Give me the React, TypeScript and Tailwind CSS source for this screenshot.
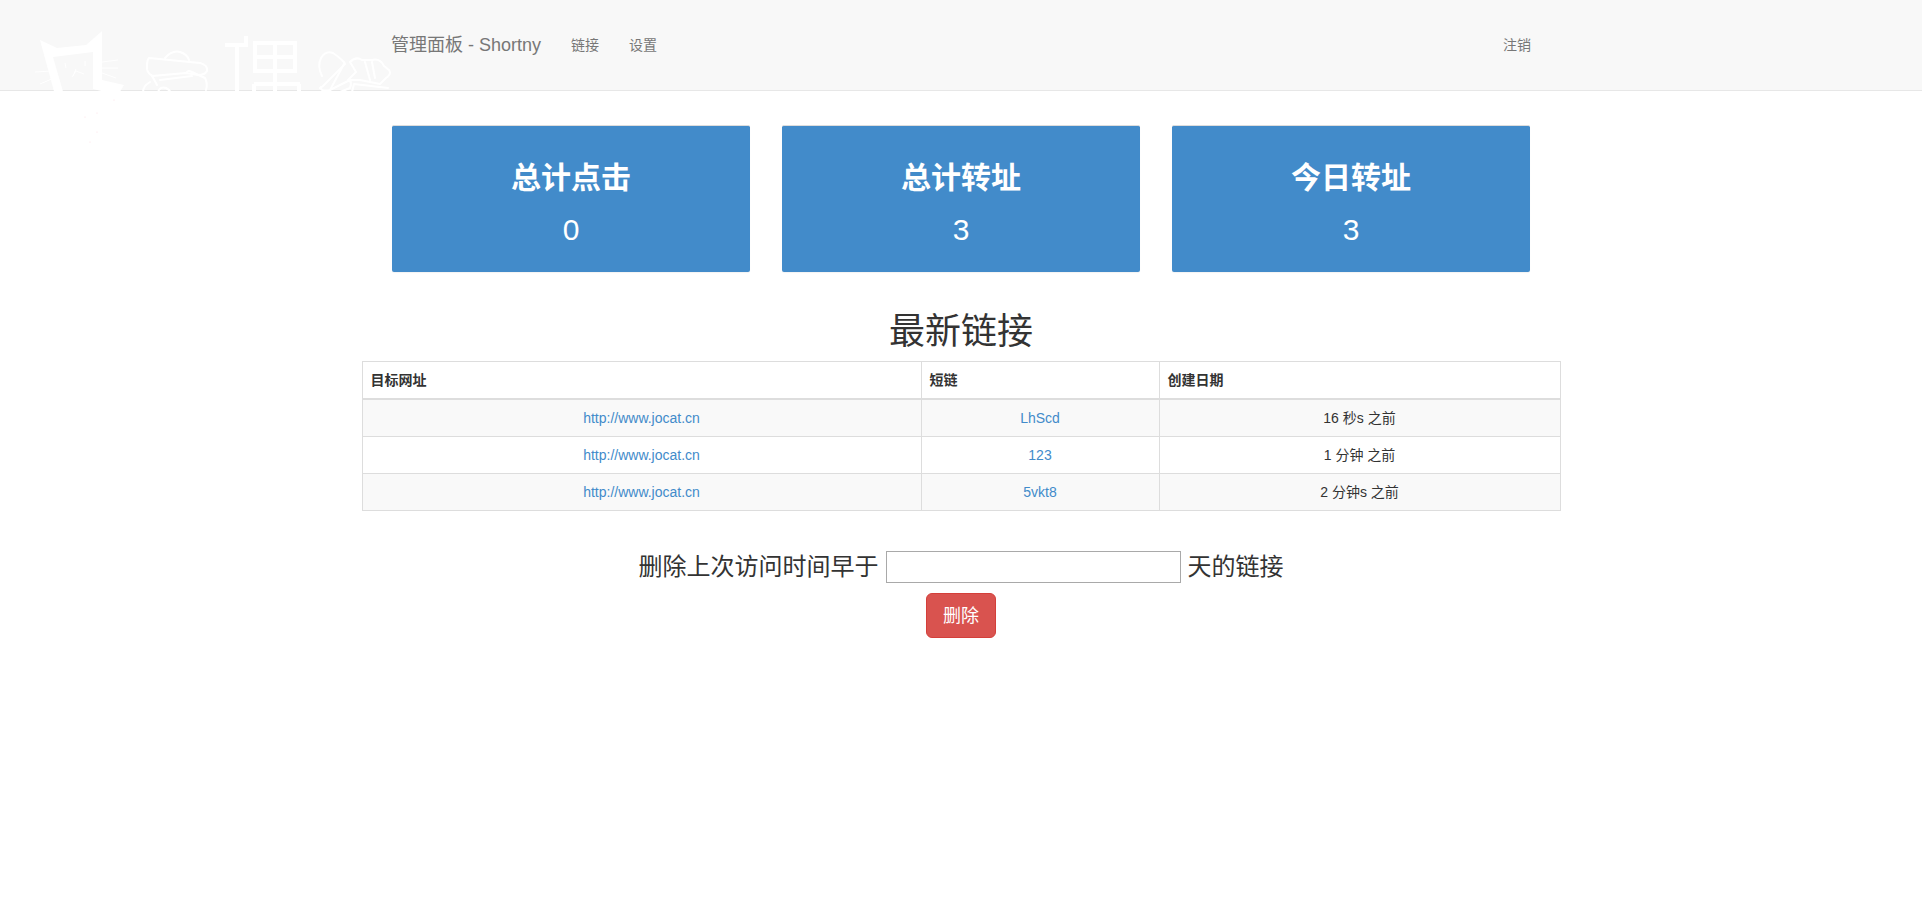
const FONT = "font-['Liberation_Sans','Noto_Sans_CJK_SC',sans-serif]";

function Watermark() {
  return (
    <svg className="absolute left-0 top-0" width="400" height="150" viewBox="0 0 400 150" fill="none" aria-hidden="true">
      <path
        fillRule="evenodd"
        fill="#ffffff"
        d="M40 40 L57 48 L86 45 L102 31 L102 80 L124 85 L118 95 L93 89 L93 52 L53 57 L64 95 L55 95 Z"
      />
      <g stroke="#ffffff" strokeWidth="1">
        <path d="M35 72 L52 71 M40 84 L54 78 M102 62 L118 60 M102 68 L118 68 M102 73 L116 78" />
        <path d="M65 63 L66 68 M85 61 L85 66 M76 69 L73 76 M76 71 L84 74 M76 71 L72 77" />
      </g>
      <g stroke="#ffffff" strokeWidth="2" strokeLinejoin="round" strokeLinecap="round">
        <path d="M149 58 L200 63 Q208 65 207 71 Q205 75 198 75 L186 73 L152 76 Q146 72 147 66 Q147 60 149 58 Z" />
        <path d="M165 58 Q172 50 180 52 Q187 54 189 60" />
        <path d="M157 85 Q150 72 152 76 M187 72 Q188 70 192 72 L205 78 Q208 84 206 90 M150 82 Q143 86 143 92 M158 92 Q160 86 166 88 Q170 90 170 92 M160 80 L192 76" />
      </g>
      <g stroke="#ffffff" strokeWidth="4">
        <path d="M225 45 L248 45 M246 36 L246 47 M237 45 L237 92" />
        <path d="M255 43 H295 V71 H255 Z M255 57 H295 M275 43 V92 M254 84 H300 M254 84 V92 M299 84 V92" />
      </g>
      <g stroke="#ffffff" strokeWidth="2" strokeLinejoin="round" strokeLinecap="round">
        <path d="M322 76 Q317 66 321 58 Q326 50 333 53 Q338 56 344 62 L345 64 L323 86 Q318 90 321 87 Q320 92 330 90 L350 80 Q352 84 350 88 L340 92" />
        <path d="M344 64 L330 90 M350 62 Q356 56 362 60 L372 60 Q380 58 384 66 L389 70 Q392 74 386 78 L380 84 L360 80 L348 80 L356 72 Z" />
        <path d="M365 62 L370 80 M372 62 L375 78 M388 88 L354 84 L352 92" />
      </g>
      <g fill="#fbdde3">
        <circle cx="114" cy="100" r="0.6" />
        <circle cx="97" cy="113" r="0.6" />
        <circle cx="85" cy="117" r="0.6" />
        <circle cx="97" cy="132" r="0.6" />
        <circle cx="90" cy="142" r="0.6" />
      </g>
    </svg>
  );
}

function Stat({ title, value }: { title: string; value: string }) {
  return (
    <div className="flex h-[147px] flex-col items-center rounded-[2px] border border-[#dddddd] border-b-0 border-x-0 bg-[#428bca] pt-[32px] text-white shadow-[0_1px_1px_rgba(0,0,0,0.05)]">
      <h2 className="text-[30px] font-bold leading-[40px]">{title}</h2>
      <div className="mt-[12px] text-[30px] leading-[40px]">{value}</div>
    </div>
  );
}

const rows = [
  { url: "http://www.jocat.cn", short: "LhScd", date: "16 秒s 之前" },
  { url: "http://www.jocat.cn", short: "123", date: "1 分钟 之前" },
  { url: "http://www.jocat.cn", short: "5vkt8", date: "2 分钟s 之前" },
];

export default function App() {
  return (
    <div className={`relative min-h-[908px] bg-white text-[14px] leading-[20px] text-[#333333] ${FONT}`}>
      <nav className="h-[91px] border-b border-[#e7e7e7] bg-[#f8f8f8]">
        <div className="mx-auto flex h-[90px] w-[1170px] items-center px-[15px] text-[#777777]">
          <a className="text-[18px]" href="#">管理面板 - Shortny</a>
          <a className="ml-[30px]" href="#">链接</a>
          <a className="ml-[30px]" href="#">设置</a>
          <a className="ml-auto" href="#">注销</a>
        </div>
      </nav>
      <Watermark />

      <main className="relative">
        <section className="mx-auto mt-[34px] grid w-[1170px] grid-cols-3 gap-[32px] px-[16px]">
          <Stat title="总计点击" value="0" />
          <Stat title="总计转址" value="3" />
          <Stat title="今日转址" value="3" />
        </section>

        <h2 className="mt-[40px] text-center text-[36px] font-normal leading-[40px]">最新链接</h2>

        <table className="mx-auto mt-[9px] w-[1199px] table-fixed border-collapse border border-[#dddddd]">
          <colgroup>
            <col className="w-[559px]" />
            <col className="w-[238px]" />
            <col />
          </colgroup>
          <thead>
            <tr>
              <th className="border border-b-2 border-[#dddddd] p-[8px] text-left font-bold">目标网址</th>
              <th className="border border-b-2 border-[#dddddd] p-[8px] text-left font-bold">短链</th>
              <th className="border border-b-2 border-[#dddddd] p-[8px] text-left font-bold">创建日期</th>
            </tr>
          </thead>
          <tbody>
            {rows.map((r, i) => (
              <tr key={r.short} className={i % 2 === 0 ? "bg-[#f9f9f9]" : "bg-white"}>
                <td className="border border-[#dddddd] p-[8px] text-center">
                  <a className="text-[#428bca]" href="#">{r.url}</a>
                </td>
                <td className="border border-[#dddddd] p-[8px] text-center">
                  <a className="text-[#428bca]" href="#">{r.short}</a>
                </td>
                <td className="border border-[#dddddd] p-[8px] text-center">{r.date}</td>
              </tr>
            ))}
          </tbody>
        </table>

        <form className="mt-[40px] flex flex-col items-center">
          <div className="flex items-center text-[24px] leading-[32px]">
            <span>删除上次访问时间早于</span>
            <input className="mx-[7px] h-[32px] w-[295px] border border-[#a9a9a9] bg-white" type="text" />
            <span>天的链接</span>
          </div>
          <button className="mt-[10px] h-[45px] w-[70px] rounded-[6px] border border-[#d43f3a] bg-[#d9534f] text-[18px] text-white" type="button">
            删除
          </button>
        </form>
      </main>
    </div>
  );
}
